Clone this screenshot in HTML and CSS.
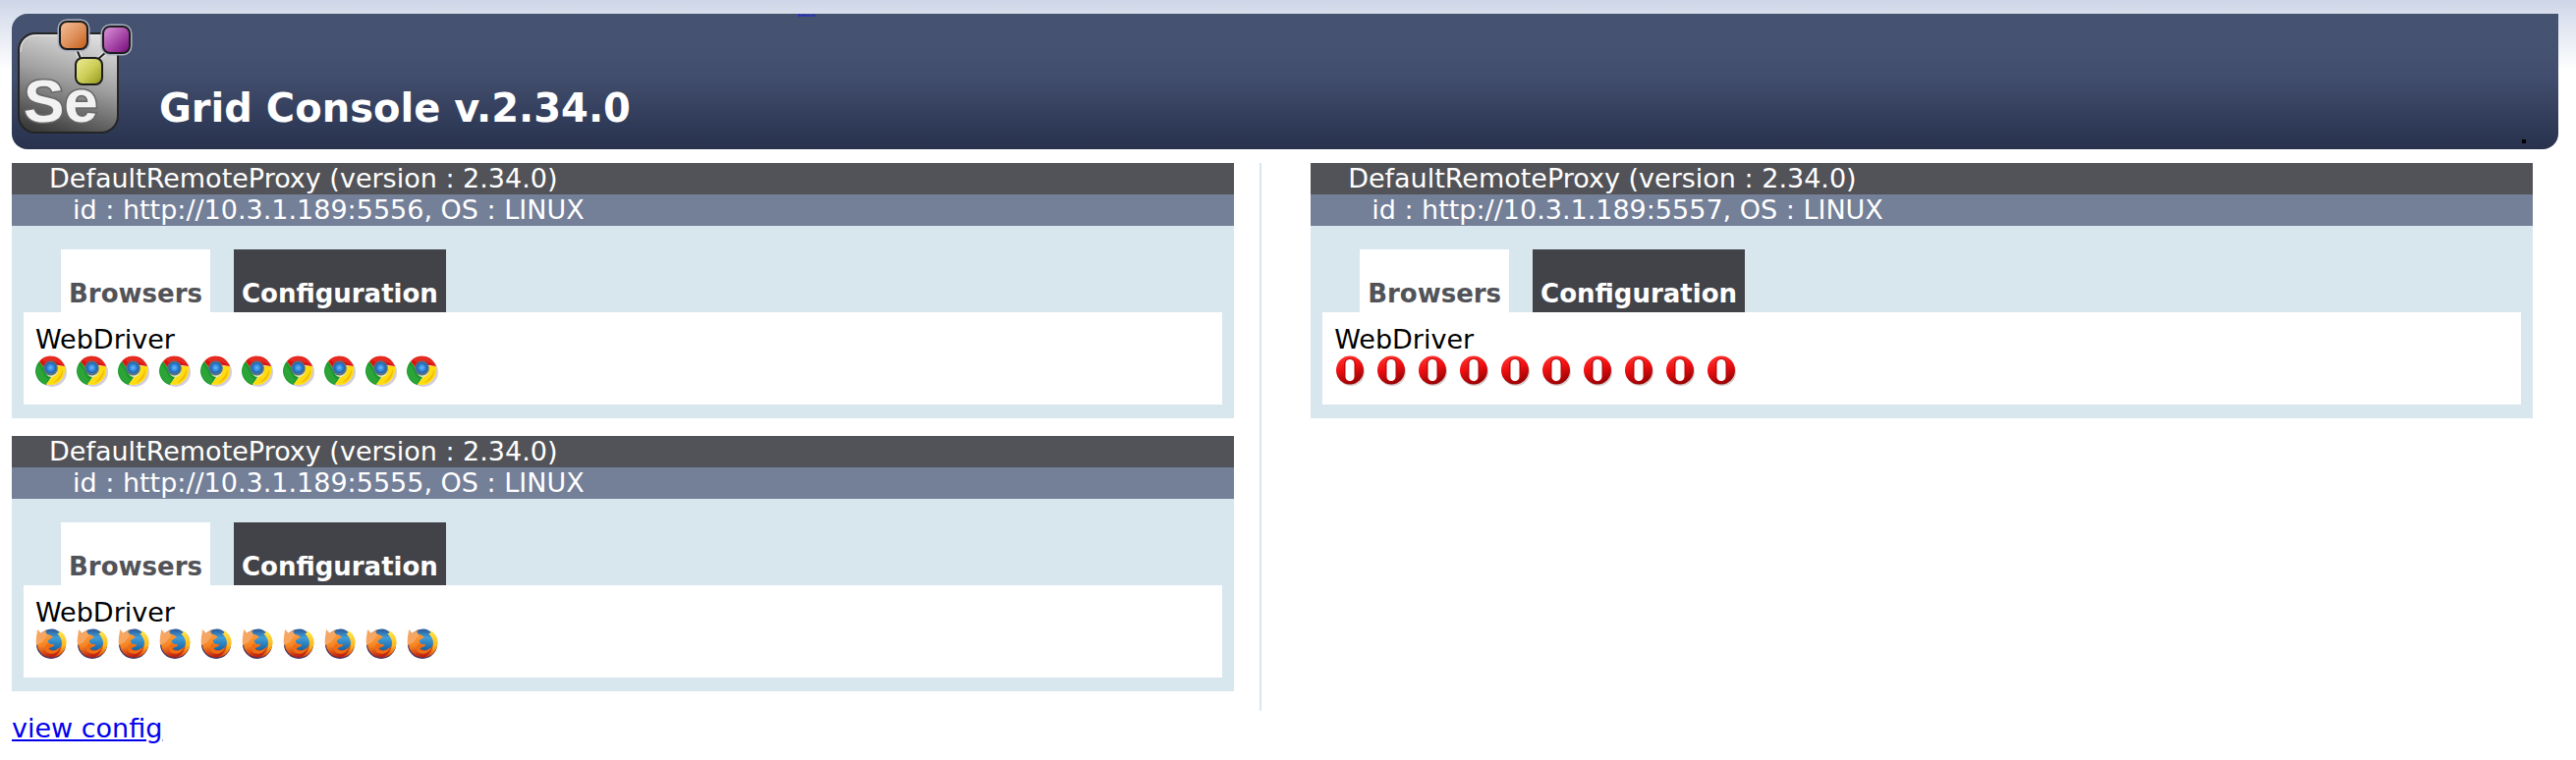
FILE: index.html
```html
<!DOCTYPE html>
<html lang="en">
<head>
    <meta charset="UTF-8">
    <meta name="viewport" content="width=device-width, initial-scale=1.0">
    <title>Grid Console</title>
    <link rel="stylesheet" href="styles.css">
</head>
<body>
    <!-- shared icon artwork -->
    <svg class="sprites" aria-hidden="true">
        <defs>
            <linearGradient id="gOrange" x1="0" y1="0" x2="1" y2="1"><stop offset="0" stop-color="#f6c09a"/><stop offset="0.5" stop-color="#e0935f"/><stop offset="1" stop-color="#c25a14"/></linearGradient>
            <linearGradient id="gPurple" x1="0" y1="0" x2="1" y2="1"><stop offset="0" stop-color="#dc9ada"/><stop offset="0.5" stop-color="#aa4cab"/><stop offset="1" stop-color="#730a78"/></linearGradient>
            <linearGradient id="gYellow" x1="0" y1="0" x2="1" y2="1"><stop offset="0" stop-color="#ecec96"/><stop offset="0.5" stop-color="#cdcf59"/><stop offset="1" stop-color="#8f9418"/></linearGradient>
            <linearGradient id="gGrey" x1="0.6" y1="0" x2="0.3" y2="1"><stop offset="0" stop-color="#dcdcdc"/><stop offset="0.45" stop-color="#a0a0a0"/><stop offset="1" stop-color="#3c3c3c"/></linearGradient>
            <radialGradient id="gBlue"><stop offset="0" stop-color="#6db8f8"/><stop offset="0.6" stop-color="#2f86dc"/><stop offset="1" stop-color="#1b5ca8"/></radialGradient>
            <linearGradient id="gOpera" x1="0" y1="0" x2="0.3" y2="1"><stop offset="0" stop-color="#ff3a34"/><stop offset="0.5" stop-color="#f00f10"/><stop offset="1" stop-color="#9c0306"/></linearGradient>
            <linearGradient id="gFox" x1="0" y1="0" x2="0.2" y2="1"><stop offset="0" stop-color="#ffa850"/><stop offset="0.6" stop-color="#f68420"/><stop offset="1" stop-color="#c02410"/></linearGradient>
            <linearGradient id="gTail" x1="0" y1="0" x2="0" y2="1"><stop offset="0" stop-color="#ffe94a"/><stop offset="0.6" stop-color="#ffb41e"/><stop offset="1" stop-color="#dc4410"/></linearGradient>
            <linearGradient id="gGlobe" x1="0" y1="0" x2="0" y2="1"><stop offset="0" stop-color="#2a5596"/><stop offset="0.4" stop-color="#3f9fd8"/><stop offset="1" stop-color="#1a62a4"/></linearGradient>
        </defs>
        <symbol id="chrome" viewBox="0 0 32 32">
            <circle cx="17" cy="17" r="15" fill="#d3cede"/>
            <circle cx="15" cy="15.500" r="14.500" fill="#f4e9b0"/>
            <path d="M4 6C8 1 14 0 19 1c5 1 9 5 11 10L17 9c-4-1-6 1-8 4z" fill="#dc1410"/>
            <path d="M6 4C11 0 18 0 22 3c4 2 6 5 7 7-6-4-14-5-19-3z" fill="#e62c22"/>
            <path d="M4 6l6 9c0 4 3 7 6 7l-5 8C5 29 0 22 0 16 0 12 2 8 4 6z" fill="#189a2c"/>
            <path d="M3 9l5 8c1 4 3 6 5 7l-3 5C4 27 1 21 1 16c0-3 1-5 2-7z" fill="#2ca438"/>
            <path d="M21 11h9c1 6-1 12-5 15-4 4-9 5-14 3l6-7c5-1 7-6 4-11z" fill="#ffdc10"/>
            <path d="M28 14c1 6-4 13-10 14 5-4 8-8 10-14z" fill="#f1b90c"/>
            <circle cx="15.500" cy="13" r="7.400" fill="#55748a"/>
            <circle cx="15.500" cy="12.500" r="5.600" fill="url(#gBlue)"/>
        </symbol>
        <symbol id="firefox" viewBox="0 0 32 32">
            <circle cx="16" cy="16" r="15" fill="#46345e"/>
            <circle cx="16" cy="15.500" r="14" fill="url(#gFox)"/>
            <path d="M1 17C0 10 2 5 2 1l4 4 5-4 1 6-5 7z" fill="#f6a660"/>
            <path d="M10 3c5-4 12-3 15 2 3 4 3 11 0 15-3 3-8 3-11 1-1-3 5-1 5-5-3 1-7-1-6-4l5-3c-2-2-4-3-6-3z" fill="url(#gGlobe)"/>
            <path d="M24 2c6 3 9 10 7 16-2 7-6 10-12 11 5-3 8-8 8-14 0-4-2-7-5-10 2 1 3-1 2-3z" fill="url(#gTail)"/>
            <path d="M12 15c2 2 4 2 7 1-1 4-6 3-6 5 3 3 8 2 12-2-2 6-7 8-12 6-4-2-4-6-1-10z" fill="#ef6e14"/>
        </symbol>
        <symbol id="opera" viewBox="0 0 32 32">
            <ellipse cx="17" cy="17" rx="14" ry="14" fill="#d4cdcd"/>
            <ellipse cx="16" cy="15" rx="14" ry="14.500" fill="url(#gOpera)"/>
            <rect x="10" y="3" width="12" height="24" rx="6" fill="#bf090b"/>
            <rect x="11.500" y="4" width="9" height="22" rx="4.500" fill="#fff"/>
        </symbol>
    </svg>

    <header class="header">
        <svg class="logo" viewBox="0 0 124 124" role="img" aria-label="Selenium">
            <rect x="7" y="17" width="101" height="101" rx="17" fill="url(#gGrey)" stroke="#252525" stroke-width="2"/>
            <path d="M9 36q0-17 16-17h64q16 0 16 16" fill="none" stroke="#f4f4f4" stroke-width="1" opacity="0.7"/>
            <path d="M66 33l7 17M97 35L86 45" stroke="#e0e0e0" stroke-width="5"/>
            <path d="M66 33l7 17M97 35L86 45" stroke="#202020" stroke-width="2"/>
            <g stroke="#aab0c0" stroke-width="5">
                <rect x="49" y="5" width="28" height="28" rx="7"/>
                <rect x="93" y="10" width="27" height="27" rx="7"/>
            </g>
            <g stroke="#1c1c1c" stroke-width="2">
                <rect x="49" y="5" width="28" height="28" rx="7" fill="url(#gOrange)"/>
                <rect x="93" y="10" width="27" height="27" rx="7" fill="url(#gPurple)"/>
                <rect x="65" y="42" width="27" height="27" rx="7" fill="url(#gYellow)"/>
            </g>
            <text class="logo-text" x="12" y="107">Se</text>
        </svg>
        <h1>Grid Console v.2.34.0</h1>
        <a class="home-link" href="#">Selenium</a>
        <a class="help-link" href="#" aria-label="Help"></a>
    </header>

    <main class="columns">
        <div class="column column-left">
            <section class="proxy">
                <h2 class="proxy-name">DefaultRemoteProxy (version : 2.34.0)</h2>
                <p class="proxy-id">id : http://10.3.1.189:5556, OS : LINUX</p>
                <div class="proxy-body">
                    <div class="tabs">
                        <button class="tab selected" type="button">Browsers</button>
                        <button class="tab" type="button">Configuration</button>
                    </div>
                    <div class="content">
                        <p>WebDriver</p>
                        <div class="icons">
                            <svg><use href="#chrome"/></svg>
                            <svg><use href="#chrome"/></svg>
                            <svg><use href="#chrome"/></svg>
                            <svg><use href="#chrome"/></svg>
                            <svg><use href="#chrome"/></svg>
                            <svg><use href="#chrome"/></svg>
                            <svg><use href="#chrome"/></svg>
                            <svg><use href="#chrome"/></svg>
                            <svg><use href="#chrome"/></svg>
                            <svg><use href="#chrome"/></svg>
                        </div>
                    </div>
                </div>
            </section>
            <section class="proxy">
                <h2 class="proxy-name">DefaultRemoteProxy (version : 2.34.0)</h2>
                <p class="proxy-id">id : http://10.3.1.189:5555, OS : LINUX</p>
                <div class="proxy-body">
                    <div class="tabs">
                        <button class="tab selected" type="button">Browsers</button>
                        <button class="tab" type="button">Configuration</button>
                    </div>
                    <div class="content">
                        <p>WebDriver</p>
                        <div class="icons">
                            <svg><use href="#firefox"/></svg>
                            <svg><use href="#firefox"/></svg>
                            <svg><use href="#firefox"/></svg>
                            <svg><use href="#firefox"/></svg>
                            <svg><use href="#firefox"/></svg>
                            <svg><use href="#firefox"/></svg>
                            <svg><use href="#firefox"/></svg>
                            <svg><use href="#firefox"/></svg>
                            <svg><use href="#firefox"/></svg>
                            <svg><use href="#firefox"/></svg>
                        </div>
                    </div>
                </div>
            </section>
        </div>
        <div class="column">
            <section class="proxy">
                <h2 class="proxy-name">DefaultRemoteProxy (version : 2.34.0)</h2>
                <p class="proxy-id">id : http://10.3.1.189:5557, OS : LINUX</p>
                <div class="proxy-body">
                    <div class="tabs">
                        <button class="tab selected" type="button">Browsers</button>
                        <button class="tab" type="button">Configuration</button>
                    </div>
                    <div class="content">
                        <p>WebDriver</p>
                        <div class="icons">
                            <svg><use href="#opera"/></svg>
                            <svg><use href="#opera"/></svg>
                            <svg><use href="#opera"/></svg>
                            <svg><use href="#opera"/></svg>
                            <svg><use href="#opera"/></svg>
                            <svg><use href="#opera"/></svg>
                            <svg><use href="#opera"/></svg>
                            <svg><use href="#opera"/></svg>
                            <svg><use href="#opera"/></svg>
                            <svg><use href="#opera"/></svg>
                        </div>
                    </div>
                </div>
            </section>
        </div>
    </main>
    <a class="config-link" href="#">view config</a>
</body>
</html>
```
FILE: styles.css
```css
body {
    margin: 0;
    padding: 14px 18px 14px 12px;
    font-family: Verdana, "DejaVu Sans", sans-serif;
    font-size: 27px;
    line-height: 32px;
    color: #000;
    background: #fff linear-gradient(#ced5e6, #dce2ef 20px, #fff 72px) no-repeat;
}
h1, h2, p {
    margin: 0;
    font-weight: normal;
}
.sprites {
    position: absolute;
    width: 0;
    height: 0;
}
.header {
    position: relative;
    display: flex;
    align-items: flex-start;
    height: 138px;
    border-radius: 16px 0 16px 16px;
    background: linear-gradient(#455371, #445170 40px, #414d6c 66px, #2d3855 120px, #28324d);
}
.logo {
    width: 124px;
    height: 124px;
    margin-top: 3px;
}
.logo-text {
    font-family: "Liberation Sans", Arial, sans-serif;
    font-size: 62px;
    font-weight: bold;
    fill: #f2f2f2;
    stroke: #666;
    stroke-width: 3px;
    paint-order: stroke;
}
.header h1 {
    margin: 71px 0 0 26px;
    font-size: 40px;
    font-weight: bold;
    line-height: 50px;
    color: #fff;
}
.home-link,
.help-link {
    position: absolute;
    text-decoration: none;
}
.home-link {
    left: 800px;
    top: 0;
    font-size: 4px;
    line-height: 4px;
    color: #00f;
}
.help-link {
    right: 33px;
    bottom: 6px;
    width: 4px;
    height: 4px;
    background-color: #000;
}
.columns {
    display: flex;
    margin-top: 14px;
}
.column {
    display: flex;
    flex-direction: column;
    gap: 18px;
    width: 48%;
}
.column-left {
    padding: 0 26px 20px 0;
    margin-right: 50px;
    border-right: 2px solid #d8e6ee;
}
.proxy-name,
.proxy-id {
    font-size: 27px;
    color: #fff;
}
.proxy-name {
    padding-left: 38px;
    background-color: #525358;
}
.proxy-id {
    padding-left: 62px;
    background-color: #747f98;
}
.proxy-body {
    padding: 24px 12px 14px;
    background-color: #d8e6ee;
}
.tabs {
    display: flex;
    gap: 24px;
    padding-left: 38px;
}
.tab {
    height: 64px;
    padding: 25px 8px 0;
    border: none;
    font-family: inherit;
    font-size: 26px;
    font-weight: bold;
    color: #fff;
    background-color: #424348;
    cursor: pointer;
}
.tab.selected {
    color: #525358;
    background-color: #fff;
}
.content {
    padding: 12px 12px 18px;
    background-color: #fff;
}
.icons {
    display: flex;
    gap: 10px;
}
.icons svg {
    width: 32px;
    height: 32px;
}
.config-link {
    display: inline-block;
    margin-top: 2px;
    color: #00e;
}
```
